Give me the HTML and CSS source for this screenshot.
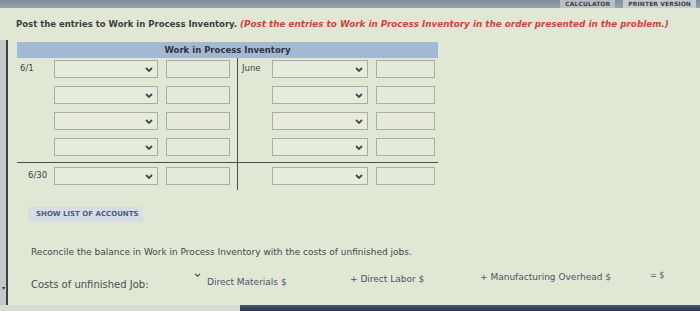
FILE: index.html
```html
<!DOCTYPE html>
<html>
<head>
<meta charset="utf-8">
<link rel="stylesheet" href="styles.css">
</head>
<body>
<div class="topbar">
  <span class="tbtn calc">CALCULATOR</span>
  <span class="tbtn">PRINTER VERSION</span>
</div>
<div class="screen">
  <div class="edge"><span class="edge-arrow">&#9662;</span></div>
  <div class="page">
    <p class="prompt">Post the entries to Work in Process Inventory. <em class="note">(Post the entries to Work in Process Inventory in the order presented in the problem.)</em></p>

    <div class="ledger">
      <div class="ledger-head">Work in Process Inventory</div>

      <div class="lrow">
        <div class="side left"><span class="lab">6/1</span><span class="sel"><svg class="chev" viewBox="0 0 8 5"><polyline points="1,1 4,4 7,1"/></svg></span><span class="inp"></span></div>
        <div class="side right"><span class="lab rlab">June</span><span class="sel rsel"><svg class="chev" viewBox="0 0 8 5"><polyline points="1,1 4,4 7,1"/></svg></span><span class="inp rinp"></span></div>
      </div>
      <div class="lrow">
        <div class="side left"><span class="lab"></span><span class="sel"><svg class="chev" viewBox="0 0 8 5"><polyline points="1,1 4,4 7,1"/></svg></span><span class="inp"></span></div>
        <div class="side right"><span class="lab rlab"></span><span class="sel rsel"><svg class="chev" viewBox="0 0 8 5"><polyline points="1,1 4,4 7,1"/></svg></span><span class="inp rinp"></span></div>
      </div>
      <div class="lrow">
        <div class="side left"><span class="lab"></span><span class="sel"><svg class="chev" viewBox="0 0 8 5"><polyline points="1,1 4,4 7,1"/></svg></span><span class="inp"></span></div>
        <div class="side right"><span class="lab rlab"></span><span class="sel rsel"><svg class="chev" viewBox="0 0 8 5"><polyline points="1,1 4,4 7,1"/></svg></span><span class="inp rinp"></span></div>
      </div>
      <div class="lrow last">
        <div class="side left"><span class="lab"></span><span class="sel"><svg class="chev" viewBox="0 0 8 5"><polyline points="1,1 4,4 7,1"/></svg></span><span class="inp"></span></div>
        <div class="side right"><span class="lab rlab"></span><span class="sel rsel"><svg class="chev" viewBox="0 0 8 5"><polyline points="1,1 4,4 7,1"/></svg></span><span class="inp rinp"></span></div>
      </div>
      <div class="lrow total">
        <div class="side left"><span class="lab lab30">6/30</span><span class="sel"><svg class="chev" viewBox="0 0 8 5"><polyline points="1,1 4,4 7,1"/></svg></span><span class="inp"></span></div>
        <div class="side right"><span class="lab rlab"></span><span class="sel rsel"><svg class="chev" viewBox="0 0 8 5"><polyline points="1,1 4,4 7,1"/></svg></span><span class="inp rinp"></span></div>
      </div>
    </div>

    <div class="showlist">SHOW LIST OF ACCOUNTS</div>

    <p class="reconcile">Reconcile the balance in Work in Process Inventory with the costs of unfinished jobs.</p>

    <div class="costs">
      <span class="c-label">Costs of unfinished Job:</span>
      <span class="c-sel"><svg class="chev" viewBox="0 0 8 5"><polyline points="1,1 4,4 7,1"/></svg></span>
      <span class="c-item dm">Direct Materials $</span>
      <span class="c-item dl">+ Direct Labor $</span>
      <span class="c-item mo">+ Manufacturing Overhead $</span>
      <span class="c-item eq">= $</span>
    </div>
  </div>
</div>
<div class="bottom">
  <div class="bottom-light"></div>
  <div class="taskbar"></div>
</div>
</body>
</html>
```
FILE: styles.css
```css
* { box-sizing: border-box; }
html, body { margin: 0; padding: 0; }
body {
  width: 700px;
  height: 311px;
  overflow: hidden;
  background: #e1e7d5;
  font-family: "DejaVu Sans", Verdana, sans-serif;
  color: #3e4240;
}
.topbar {
  height: 8px;
  background: linear-gradient(#7f8e9c, #95a3ae);
  display: flex;
  justify-content: flex-end;
  align-items: flex-end;
  padding-right: 4px;
  gap: 8px;
}
.tbtn {
  height: 8px;
  line-height: 7px;
  font-size: 6px;
  font-weight: bold;
  color: #3a3f48;
  background: #c6ccd1;
  padding: 0 5px;
  letter-spacing: 0.1px;
  overflow: hidden;
}
.tbtn.calc { background: #b7bec6; }
.screen {
  display: flex;
  height: 297px;
}
.edge {
  width: 8px;
  margin-top: 32px;
  background: #c3cac7;
  border-right: 2px solid #3d4144;
  display: flex;
  align-items: flex-end;
  padding-bottom: 14px;
}
.edge-arrow {
  font-size: 6px;
  color: #333;
  margin-left: 2px;
}
.page {
  flex: 1;
  padding-left: 8px;
}
.prompt {
  margin: 11px 0 0 0;
  font-size: 8.5px;
  font-weight: bold;
  line-height: 10px;
  color: #3b3f3e;
  white-space: nowrap;
}
.note {
  color: #c9463b;
  font-style: italic;
  font-size: 8.8px;
}
.ledger {
  margin-top: 13px;
  margin-left: 1px;
  width: 421px;
}
.ledger-head {
  height: 16px;
  background: #a3b9d3;
  text-align: center;
  font-size: 8.5px;
  font-weight: bold;
  line-height: 16px;
  color: #2f3440;
}
.lrow {
  display: grid;
  grid-template-columns: 221px 200px;
  height: 26px;
}
.lrow.last { border-bottom: 1px solid #4a4d48; height: 27px; }
.lrow.total { height: 27px; }
.side {
  display: flex;
  align-items: flex-start;
  padding-top: 2px;
}
.lrow.total .side { padding-top: 4px; }
.side.left {
  border-right: 1px solid #4a4d48;
  padding-left: 3px;
}
.side.right { padding-left: 4px; }
.lab {
  width: 34px;
  font-size: 8.5px;
  padding-top: 3px;
  color: #3e4240;
}
.lab30 { padding-left: 8px; }
.rlab { width: 30px; }
.sel {
  width: 104px;
  height: 18px;
  border: 1px solid #a9aea3;
  background: #e6ebdb;
  display: flex;
  justify-content: flex-end;
  align-items: center;
  padding-right: 4px;
}
.rsel { width: 96px; }
.chev {
  width: 8px;
  height: 5px;
  fill: none;
  stroke: #45494a;
  stroke-width: 1.8;
}
.inp {
  width: 64px;
  height: 18px;
  margin-left: 8px;
  border: 1px solid #a9aea3;
  background: #e4e9d9;
}
.rinp { width: 59px; }
.showlist {
  margin-top: 17px;
  margin-left: 12px;
  width: 115px;
  height: 15px;
  background: #d6dde3;
  font-size: 7px;
  font-weight: bold;
  line-height: 15px;
  color: #4b5c85;
  padding-left: 8px;
  white-space: nowrap;
}
.reconcile {
  margin: 25px 0 0 15px;
  font-size: 9px;
  line-height: 10px;
  color: #454947;
  white-space: nowrap;
}
.costs {
  margin-top: 17px;
  margin-left: 15px;
  display: flex;
  align-items: center;
  font-size: 9px;
  color: #4a4e4c;
  white-space: nowrap;
  height: 14px;
}
.c-label { width: 145px; font-size: 10px; padding-top: 6px; }
.c-sel {
  width: 26px;
  height: 12px;
  display: flex;
  justify-content: flex-end;
  align-items: flex-start;
  padding-right: 1px;
  margin-top: -4px;
}
.c-sel .chev { width: 7px; height: 4px; stroke-width: 1.4; }
.c-item { color: #4d5566; }
.dm { width: 143px; margin-left: 5px; padding-top: 2px; }
.dl { width: 130px; margin-top: -4px; }
.mo { width: 170px; margin-top: -8px; }
.eq { margin-top: -12px; font-size: 8px; }
.bottom {
  display: flex;
  height: 6px;
}
.bottom-light { width: 240px; background: #d6ddd0; }
.taskbar { flex: 1; background: linear-gradient(#4a5470, #2e3550); }
```
